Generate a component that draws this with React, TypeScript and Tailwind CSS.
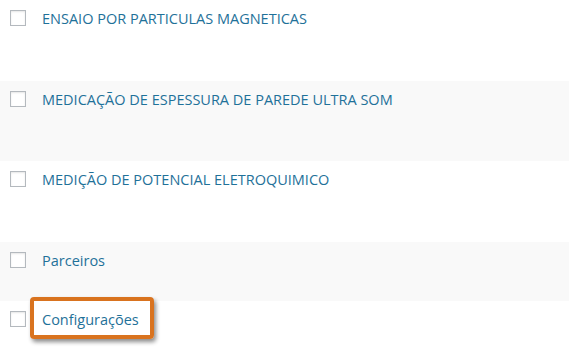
const rows = [
  { label: 'ENSAIO POR PARTICULAS MAGNETICAS', height: 'h-[81px]', alt: false },
  { label: 'MEDICAÇÃO DE ESPESSURA DE PAREDE ULTRA SOM', height: 'h-[80px]', alt: true },
  { label: 'MEDIÇÃO DE POTENCIAL ELETROQUIMICO', height: 'h-[81px]', alt: false },
  { label: 'Parceiros', height: 'h-[59px]', alt: true },
]

function Checkbox() {
  return (
    <span className="mt-[10px] block h-4 w-4 shrink-0 border border-[#b4b9be] bg-white shadow-[inset_0_1px_2px_rgba(0,0,0,0.1)]" />
  )
}

export default function App() {
  return (
    <div className="h-[363px] w-[569px] overflow-hidden bg-white font-['Open_Sans',sans-serif] text-[14.5px] text-[#1f7199]">
      {rows.map((row) => (
        <div key={row.label} className={`flex ${row.height} gap-4 pl-[10px] ${row.alt ? 'bg-[#f9f9f9]' : 'bg-white'}`}>
          <Checkbox />
          <span className="pt-[9px] leading-[20px]">{row.label}</span>
        </div>
      ))}
      <div className="relative flex gap-4 pl-[10px]">
        <Checkbox />
        <span className="pt-[9px] leading-[20px]">Configurações</span>
        <div className="pointer-events-none absolute left-[30px] top-[-4px] h-[42px] w-[124px] rounded-[4px] border-[4px] border-[#d9731f] shadow-[2px_3px_4px_rgba(0,0,0,0.45)]" />
      </div>
    </div>
  )
}
